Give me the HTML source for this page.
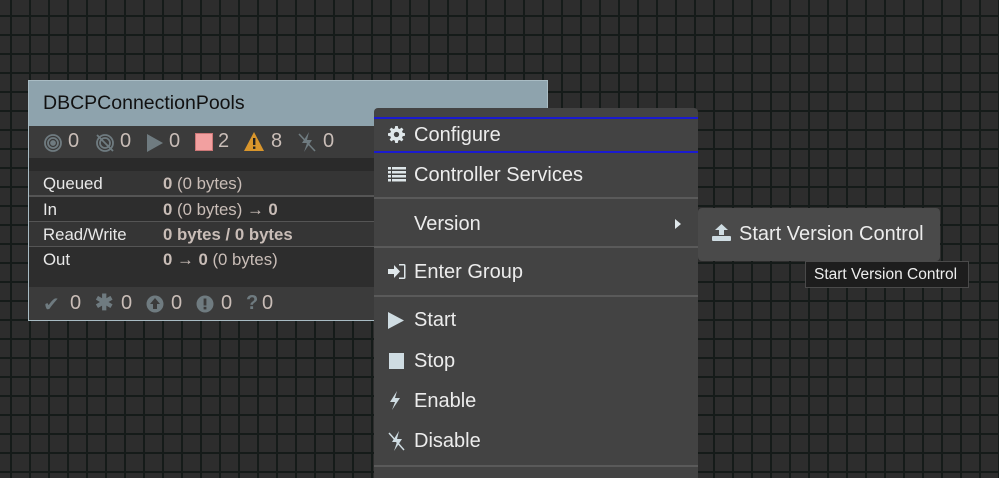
<!DOCTYPE html>
<html><head><meta charset="utf-8"><style>
*{margin:0;padding:0;box-sizing:border-box}
body{width:999px;height:475px;overflow:hidden;position:relative;font-family:"Liberation Sans",sans-serif;
background-color:#2d2d2d;
background-image:linear-gradient(90deg,#151b19 2px,transparent 2px),linear-gradient(#151b19 2px,transparent 2px);
background-size:19px 19px;background-position:10px 15px;}
.abs{position:absolute}
.node{left:28px;top:80px;width:520px;height:241px;border:1px solid #a9bcc4;background:#2f2f2f}
.hdr{left:0;top:0;width:518px;height:45px;background:#8ea3ad;color:#111;font-size:19.5px;padding:11px 0 0 14px}
.stats{left:0;top:45px;width:518px;height:32px;background:#3b3b3b;color:#c9bdb7;font-size:20px}
.row{left:0;width:518px;height:25px;font-size:16.8px;color:#e8e8e8;padding-left:14px;line-height:25px}
.row .v{position:absolute;left:134px;color:#c9bdb7}
.row b{font-weight:bold}
.bot{left:0;top:206px;width:518px;height:33px;background:#3b3b3b;color:#c9bdb7;font-size:20px}
.menu{left:374px;top:108px;width:324px;height:370px;background:#434343;border-radius:4px 4px 0 0;color:#ececec;font-size:20px}
.it{position:absolute;left:40px}
.sep{position:absolute;left:0;width:324px;height:2px;background:#5a5a5a}
.ic{position:absolute;left:14px}
</style></head><body>
<div class="abs node">
 <div class="abs hdr">DBCPConnectionPools</div>
 <div class="abs stats">
  <svg class="abs" style="left:14px;top:7px" width="20" height="20" viewBox="0 0 20 20" fill="none" stroke="#6f7b80" stroke-width="1.8"><circle cx="10" cy="10" r="8"/><circle cx="10" cy="10" r="5"/><circle cx="10" cy="10" r="2" fill="#6f7b80"/></svg>
  <span class="abs" style="left:39px;top:4px">0</span>
  <svg class="abs" style="left:66px;top:7px" width="20" height="20" viewBox="0 0 20 20" fill="none" stroke="#6f7b80" stroke-width="1.8"><circle cx="10" cy="10" r="8"/><circle cx="10" cy="10" r="5"/><line x1="2" y1="2" x2="18" y2="18"/></svg>
  <span class="abs" style="left:91px;top:4px">0</span>
  <svg class="abs" style="left:117px;top:7px" width="18" height="20"><polygon points="1,1 17,10 1,19" fill="#6f7b80"/></svg>
  <span class="abs" style="left:140px;top:4px">0</span>
  <div class="abs" style="left:166px;top:7px;width:18px;height:18px;background:#f2a0a0;border:1px solid #c77"></div>
  <span class="abs" style="left:189px;top:4px">2</span>
  <svg class="abs" style="left:214px;top:5px" width="22" height="21"><polygon points="11,1 21,20 1,20" fill="#d9962c"/><rect x="10" y="7" width="2.4" height="7" fill="#222"/><rect x="10" y="15.5" width="2.4" height="2.4" fill="#222"/></svg>
  <span class="abs" style="left:242px;top:4px">8</span>
  <svg class="abs" style="left:268px;top:5px" width="20" height="22" stroke="#6f7b80" fill="#6f7b80"><polygon points="12,1 5,12 10,12 7,21 15,9 10,9" stroke="none"/><line x1="2" y1="3" x2="18" y2="20" stroke-width="1.6"/></svg>
  <span class="abs" style="left:294px;top:4px">0</span>
 </div>
 <div class="abs" style="left:0;top:77px;width:518px;height:13px;background:#2a2a2a"></div>
 <div class="abs row" style="top:90px;background:#353535">Queued<span class="v"><b>0</b> (0 bytes)</span></div>
 <div class="abs" style="left:0;top:114px;width:518px;height:2px;background:#555"></div>
 <div class="abs row" style="top:116px;background:#2d2d2d">In<span class="v"><b>0</b> (0 bytes) → <b>0</b></span></div>
 <div class="abs" style="left:0;top:140px;width:518px;height:2px;background:#555"></div>
 <div class="abs row" style="top:141px;background:#353535">Read/Write<span class="v"><b>0 bytes / 0 bytes</b></span></div>
 <div class="abs" style="left:0;top:165px;width:518px;height:2px;background:#555"></div>
 <div class="abs row" style="top:166px;background:#2d2d2d;height:40px">Out<span class="v"><b>0</b> → <b>0</b> (0 bytes)</span></div>
 <div class="abs bot">
  <span class="abs" style="left:14px;top:5px;color:#6f7b80">✔</span><span class="abs" style="left:41px;top:5px">0</span>
  <span class="abs" style="left:66px;top:3px;color:#6f7b80;font-size:22px;font-weight:bold">✱</span><span class="abs" style="left:92px;top:5px">0</span>
  <svg class="abs" style="left:117px;top:8px" width="18" height="18"><circle cx="9" cy="9" r="8.5" fill="#6f7b80"/><polygon points="9,3 14,9 11,9 11,14 7,14 7,9 4,9" fill="#3b3b3b"/></svg><span class="abs" style="left:142px;top:5px">0</span>
  <svg class="abs" style="left:167px;top:8px" width="18" height="18"><circle cx="9" cy="9" r="8.5" fill="#6f7b80"/><rect x="7.6" y="3.5" width="2.8" height="7" fill="#3b3b3b"/><rect x="7.6" y="11.8" width="2.8" height="2.6" fill="#3b3b3b"/></svg><span class="abs" style="left:192px;top:5px">0</span>
  <span class="abs" style="left:217px;top:5px;color:#6f7b80;font-weight:bold">?</span><span class="abs" style="left:233px;top:5px">0</span>
 </div>
</div>

<div class="abs menu">
 <div class="abs" style="left:0;top:9px;width:324px;height:2px;background:#1a1ad0"></div>
 <div class="abs" style="left:0;top:43px;width:324px;height:2px;background:#1a1ad0"></div>
 <svg class="ic" style="top:18px" width="17" height="17" viewBox="0 0 16 16"><path fill="#dfe7ea" d="M6.8 0h2.4l.4 2.2 1.4.6 1.8-1.3 1.7 1.7-1.3 1.8.6 1.4 2.2.4v2.4l-2.2.4-.6 1.4 1.3 1.8-1.7 1.7-1.8-1.3-1.4.6-.4 2.2H6.8l-.4-2.2-1.4-.6-1.8 1.3-1.7-1.7 1.3-1.8-.6-1.4L0 9.2V6.8l2.2-.4.6-1.4-1.3-1.8 1.7-1.7 1.8 1.3 1.4-.6zM8 5.5a2.5 2.5 0 1 0 0 5 2.5 2.5 0 0 0 0-5z"/></svg>
 <span class="it" style="top:16px">Configure</span>
 <svg class="ic" style="top:58px" width="18" height="16" fill="#dfe7ea"><rect x="0" y="1" width="3" height="2.5"/><rect x="4" y="1" width="14" height="2.5"/><rect x="0" y="5" width="3" height="2.5"/><rect x="4" y="5" width="14" height="2.5"/><rect x="0" y="9" width="3" height="2.5"/><rect x="4" y="9" width="14" height="2.5"/><rect x="0" y="13" width="3" height="2.5"/><rect x="4" y="13" width="14" height="2.5"/></svg>
 <span class="it" style="top:56px">Controller Services</span>
 <div class="sep" style="top:89px"></div>
 <span class="it" style="top:105px">Version</span>
 <svg class="abs" style="left:300px;top:110px" width="8" height="12"><polygon points="1,1 7,6 1,11" fill="#dfe7ea"/></svg>
 <div class="sep" style="top:138px"></div>
 <svg class="ic" style="top:155px" width="18" height="17" fill="#dfe7ea"><path d="M0 6h6V2l6 6.5-6 6.5v-4H0z"/><path d="M11 1h5a1.5 1.5 0 0 1 1.5 1.5v12A1.5 1.5 0 0 1 16 16h-5v-1.5h5v-12h-5z"/></svg>
 <span class="it" style="top:153px">Enter Group</span>
 <div class="sep" style="top:187px"></div>
 <svg class="ic" style="top:204px" width="16" height="17"><polygon points="0,0 16,8.5 0,17" fill="#cfdce2"/></svg>
 <span class="it" style="top:201px">Start</span>
 <div class="abs" style="left:15px;top:245px;width:15px;height:16px;background:#cfdce2"></div>
 <span class="it" style="top:242px">Stop</span>
 <svg class="ic" style="top:283px" width="14" height="19"><polygon points="9,0 2,11 7,11 4,19 12,7 7,7" fill="#cfdce2"/></svg>
 <span class="it" style="top:282px">Enable</span>
 <svg class="ic" style="top:323px" width="18" height="20"><polygon points="11,0 4,11 9,11 6,20 14,8 9,8" fill="#cfdce2"/><line x1="1" y1="2" x2="16" y2="19" stroke="#cfdce2" stroke-width="1.5"/></svg>
 <span class="it" style="top:322px">Disable</span>
 <div class="sep" style="top:357px"></div>
</div>

<div class="abs" style="left:698px;top:208px;width:242px;height:53px;background:#4a4a4a;border-radius:4px;color:#ececec;font-size:20px">
 <svg class="abs" style="left:14px;top:16px" width="19" height="17" fill="#cfdce2"><polygon points="9.5,0 16,6 12,6 12,11 7,11 7,6 3,6"/><rect x="0" y="12" width="19" height="5" rx="1"/></svg>
 <span class="abs" style="left:41px;top:15px">Start Version Control</span>
</div>
<div class="abs" style="left:805px;top:261px;width:164px;height:27px;background:#1d1d1d;border:1px solid #4a4a4a;color:#eee;font-size:15.5px;padding:4px 0 0 8px;white-space:nowrap">Start Version Control</div>
</body></html>
